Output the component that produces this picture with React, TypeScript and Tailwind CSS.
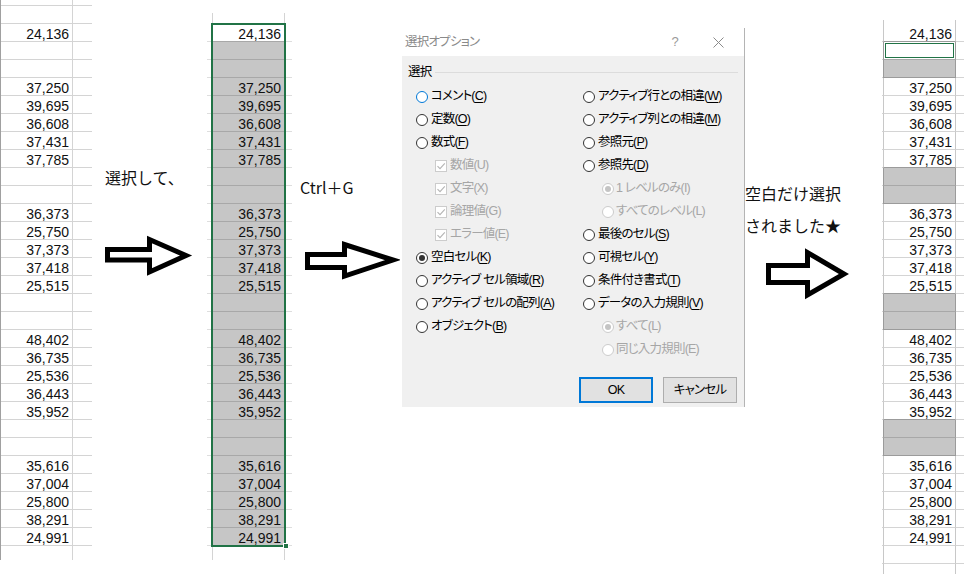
import type React from "react"

const values = [
  "24,136", "", "", "37,250", "39,695", "36,608", "37,431", "37,785", "", "",
  "36,373", "25,750", "37,373", "37,418", "25,515", "", "", "48,402", "36,735",
  "25,536", "36,443", "35,952", "", "", "35,616", "37,004", "25,800", "38,291", "24,991",
]

// rows that got picked by "空白セル" in the result sheet
const blankRows = [1, 2, 8, 9, 15, 16, 22, 23]
const isBlank = (i: number) => blankRows.includes(i)

function LeftSheet() {
  return (
    <div className="w-[95px] shrink-0">
      <div className="w-[92px] border-l border-[#a0a0a0]">
        <div className="flex h-[6px] border-b border-[#d4d4d4]">
          <div className="w-[72px] border-r border-[#d4d4d4]" />
        </div>
        <div className="flex h-[18px] border-b border-[#d4d4d4]">
          <div className="w-[72px] border-r border-[#d4d4d4]" />
        </div>
        {values.map((v, i) => (
          <div key={i} className="flex h-[18px] border-b border-[#d4d4d4]">
            <div className="w-[72px] border-r border-[#d4d4d4] pr-[3px] text-right leading-[20px]">{v}</div>
          </div>
        ))}
        <div className="flex h-[14px]">
          <div className="w-[72px] border-r border-[#d4d4d4]" />
        </div>
      </div>
    </div>
  )
}

function SelectedSheet() {
  return (
    <div className="w-[91px] shrink-0 pl-[2px]">
      <div className="h-[24px] pt-[13px]">
        <div className="ml-[5px] h-[11px] w-[73px] border-x border-[#d4d4d4]" />
      </div>
      <div className="relative w-[85px]">
        {values.map((v, i) => (
          <div key={i} className="flex h-[18px]">
            <div className="w-[5px] border-b border-[#dedede]" />
            <div
              className={
                i === 0
                  ? "w-[73px] border-b border-[#a8a8a8] bg-white pr-[4px] text-right leading-[20px]"
                  : "w-[73px] border-b border-[#a8a8a8] bg-[#c6c6c6] pr-[4px] text-right leading-[20px]"
              }
            >
              {v}
            </div>
            <div className="w-[7px] border-b border-[#dedede]" />
          </div>
        ))}
        {/* selection frame */}
        <div className="absolute left-[4px] top-[-1px] h-[524px] w-[75px] border-2 border-[#217346]" />
        <div className="absolute left-[76px] top-[519px] h-[6px] w-[6px] border border-white bg-[#217346]" />
      </div>
      <div className="ml-[5px] h-[14px] w-[73px] border-x border-[#d4d4d4]" />
    </div>
  )
}

function ResultSheet() {
  return (
    <div className="w-[94px] shrink-0 pl-[12px]">
      <div className="h-[24px] pt-[20px]">
        <div className="ml-[1px] h-[4px] w-[73px] border-x border-[#c8c8c8]" />
      </div>
      {values.map((v, i) => {
        const blank = isBlank(i)
        const lastOfBlock = blank && !isBlank(i + 1)
        const beforeBlock = !blank && isBlank(i + 1)
        return (
          <div key={i} className="flex h-[18px]">
            <div className="w-[1px] border-b border-[#d4d4d4]" />
            <div
              className={
                i === 1
                  ? "w-[73px] border-x border-b border-x-[#9b9b9b] border-b-[#a8a8a8] bg-white"
                  : blank
                    ? lastOfBlock
                      ? "w-[73px] border-x border-b border-[#9b9b9b] bg-[#c6c6c6]"
                      : "w-[73px] border-x border-b border-x-[#9b9b9b] border-b-[#a8a8a8] bg-[#c6c6c6]"
                    : beforeBlock
                      ? "w-[73px] border-x border-b border-x-[#c8c8c8] border-b-[#9b9b9b] pr-[3px] text-right leading-[20px]"
                      : "w-[73px] border-x border-b border-x-[#c8c8c8] border-b-[#d4d4d4] pr-[3px] text-right leading-[20px]"
              }
            >
              {i === 1 ? <div className="mx-[1px] mt-[1px] h-[15px] border border-[#217346]" /> : v}
            </div>
            <div className="flex-1 border-b border-[#d4d4d4]" />
          </div>
        )
      })}
      <div className="flex h-[18px]">
        <div className="w-[1px] border-b border-[#d4d4d4]" />
        <div className="w-[73px] border-x border-b border-x-[#c8c8c8] border-b-[#d4d4d4]" />
        <div className="flex-1 border-b border-[#d4d4d4]" />
      </div>
      <div className="ml-[1px] h-[10px] w-[73px] border-x border-[#c8c8c8]" />
    </div>
  )
}

function Arrow({ box, points }: { box: [number, number, number, number]; points: string }) {
  return (
    <svg width={box[2]} height={box[3]} viewBox={box.join(" ")} className="block">
      <polygon points={points} fill="white" stroke="black" strokeWidth={5} strokeLinejoin="miter" strokeMiterlimit={10} />
    </svg>
  )
}

type Item = {
  label: string
  accel?: string
  kind: "radio" | "check" | "sub"
  checked?: boolean
  focus?: boolean
}

const leftItems: Item[] = [
  { label: "コメント", accel: "C", kind: "radio", focus: true },
  { label: "定数", accel: "O", kind: "radio" },
  { label: "数式", accel: "F", kind: "radio" },
  { label: "数値(U)", kind: "check" },
  { label: "文字(X)", kind: "check" },
  { label: "論理値(G)", kind: "check" },
  { label: "エラー値(E)", kind: "check" },
  { label: "空白セル", accel: "K", kind: "radio", checked: true },
  { label: "アクティブ セル領域", accel: "R", kind: "radio" },
  { label: "アクティブ セルの配列", accel: "A", kind: "radio" },
  { label: "オブジェクト", accel: "B", kind: "radio" },
]

const rightItems: Item[] = [
  { label: "アクティブ行との相違", accel: "W", kind: "radio" },
  { label: "アクティブ列との相違", accel: "M", kind: "radio" },
  { label: "参照元", accel: "P", kind: "radio" },
  { label: "参照先", accel: "D", kind: "radio" },
  { label: "1 レベルのみ(I)", kind: "sub", checked: true },
  { label: "すべてのレベル(L)", kind: "sub" },
  { label: "最後のセル", accel: "S", kind: "radio" },
  { label: "可視セル", accel: "Y", kind: "radio" },
  { label: "条件付き書式", accel: "T", kind: "radio" },
  { label: "データの入力規則", accel: "V", kind: "radio" },
  { label: "すべて(L)", kind: "sub", checked: true },
  { label: "同じ入力規則(E)", kind: "sub" },
]

function Option({ item }: { item: Item }) {
  if (item.kind === "check") {
    return (
      <div className="flex h-[23px] items-center pl-[19px] text-[#a6a6a6]">
        <span className="flex h-[12px] w-[12px] items-center justify-center border border-[#cccccc] bg-white">
          <svg width="10" height="10" viewBox="0 0 10 10">
            <path d="M1.5 5.2 L4 7.6 L8.8 2.3" fill="none" stroke="#b4b4b4" strokeWidth="1.1" />
          </svg>
        </span>
        <span className="ml-[3px]">{item.label}</span>
      </div>
    )
  }
  if (item.kind === "sub") {
    return (
      <div className="flex h-[23px] items-center pl-[19px] text-[#a6a6a6]">
        <span className="flex h-[12px] w-[12px] items-center justify-center rounded-full border border-[#cccccc] bg-white">
          {item.checked && <span className="h-[6px] w-[6px] rounded-full bg-[#c4c4c4]" />}
        </span>
        <span className="ml-[2px]">{item.label}</span>
      </div>
    )
  }
  return (
    <div className="flex h-[23px] items-center">
      <span
        className={
          item.focus
            ? "flex h-[12px] w-[12px] items-center justify-center rounded-full border border-[#0078d7] bg-white"
            : "flex h-[12px] w-[12px] items-center justify-center rounded-full border border-[#333333] bg-white"
        }
      >
        {item.checked && <span className="h-[6px] w-[6px] rounded-full bg-[#333333]" />}
      </span>
      <span className="ml-[3px]">
        {item.label}(<span className="underline underline-offset-2">{item.accel}</span>)
      </span>
    </div>
  )
}

function SelectDialog() {
  return (
    <div className="w-[343px] shrink-0 pt-[28px]">
      <div className="flex h-[379px] flex-col border-r border-[#b4b4b4] bg-[#f0f0f0] text-[12.5px] tracking-[-0.8px] text-black [font-feature-settings:'palt']">
        <div className="flex h-[28px] items-center bg-white pl-[3px] text-[#8a8a8a]">
          <span>選択オプション</span>
          <span className="ml-auto text-[13px] text-[#9a9a9a]">?</span>
          <svg width="11" height="11" viewBox="0 0 11 11" className="ml-[35px] mr-[20px]">
            <path d="M0.5 0.5 L10.5 10.5 M10.5 0.5 L0.5 10.5" stroke="#8a8a8a" strokeWidth="1" />
          </svg>
        </div>
        <div className="mt-[8px] flex h-[16px] items-center pl-[6px] pr-[6px]">
          <span>選択</span>
          <div className="ml-[4px] h-px flex-1 bg-[#dcdcdc]" />
        </div>
        <div className="mt-[5px] flex">
          <div className="w-[181px] pl-[14px]">
            {leftItems.map((it, i) => (
              <Option key={i} item={it} />
            ))}
          </div>
          <div className="flex-1">
            {rightItems.map((it, i) => (
              <Option key={i} item={it} />
            ))}
          </div>
        </div>
        <div className="mt-[16px] flex justify-end gap-[10px] pr-[7px]">
          <button className="h-[26px] w-[74px] border-2 border-[#0078d7] bg-[#e1e1e1]">OK</button>
          <button className="h-[26px] w-[74px] border border-[#adadad] bg-[#e1e1e1]">キャンセル</button>
        </div>
      </div>
    </div>
  )
}

export default function App() {
  return (
    <div className="flex h-[574px] w-[964px] overflow-hidden bg-white font-['Liberation_Sans','Noto_Sans_CJK_JP',sans-serif] text-[14px] text-[#111]">
      <LeftSheet />

      {/* step 1 */}
      <div className="w-[110px] shrink-0 pt-[167px] font-['Noto_Sans_CJK_JP',sans-serif]">
        <div className="pl-[10px] text-[16px] leading-[20px]">選択して、</div>
        <div className="ml-[8px] mt-[48px]">
          <Arrow
            box={[103, 235, 92, 45]}
            points="107.5,249.5 149.5,249.5 149.5,239.5 186,255.5 149.5,272 149.5,260 107.5,260"
          />
        </div>
      </div>

      <SelectedSheet />

      {/* step 2 */}
      <div className="w-[106px] shrink-0 pt-[177px] font-['Noto_Sans_CJK_JP',sans-serif]">
        <div className="pl-[4px] text-[16px] leading-[20px]">Ctrl＋G</div>
        <div className="ml-[7px] mt-[43px]">
          <Arrow
            box={[303, 240, 97, 41]}
            points="307.5,254.5 344.5,254.5 344.5,244.5 393,260 344.5,276 344.5,267.5 307.5,267.5"
          />
        </div>
      </div>

      <SelectDialog />

      {/* result */}
      <div className="w-[125px] shrink-0 pt-[177px] font-['Noto_Sans_CJK_JP',sans-serif]">
        <div className="text-[16px] leading-[32px]">
          <div>空白だけ選択</div>
          <div>されました★</div>
        </div>
        <div className="ml-[19px] mt-[7px]">
          <Arrow
            box={[764, 248, 86, 52]}
            points="768.5,265.5 807.5,265.5 807.5,252.5 844,274 807.5,295 807.5,282.5 768.5,282.5"
          />
        </div>
      </div>

      <ResultSheet />
    </div>
  )
}
